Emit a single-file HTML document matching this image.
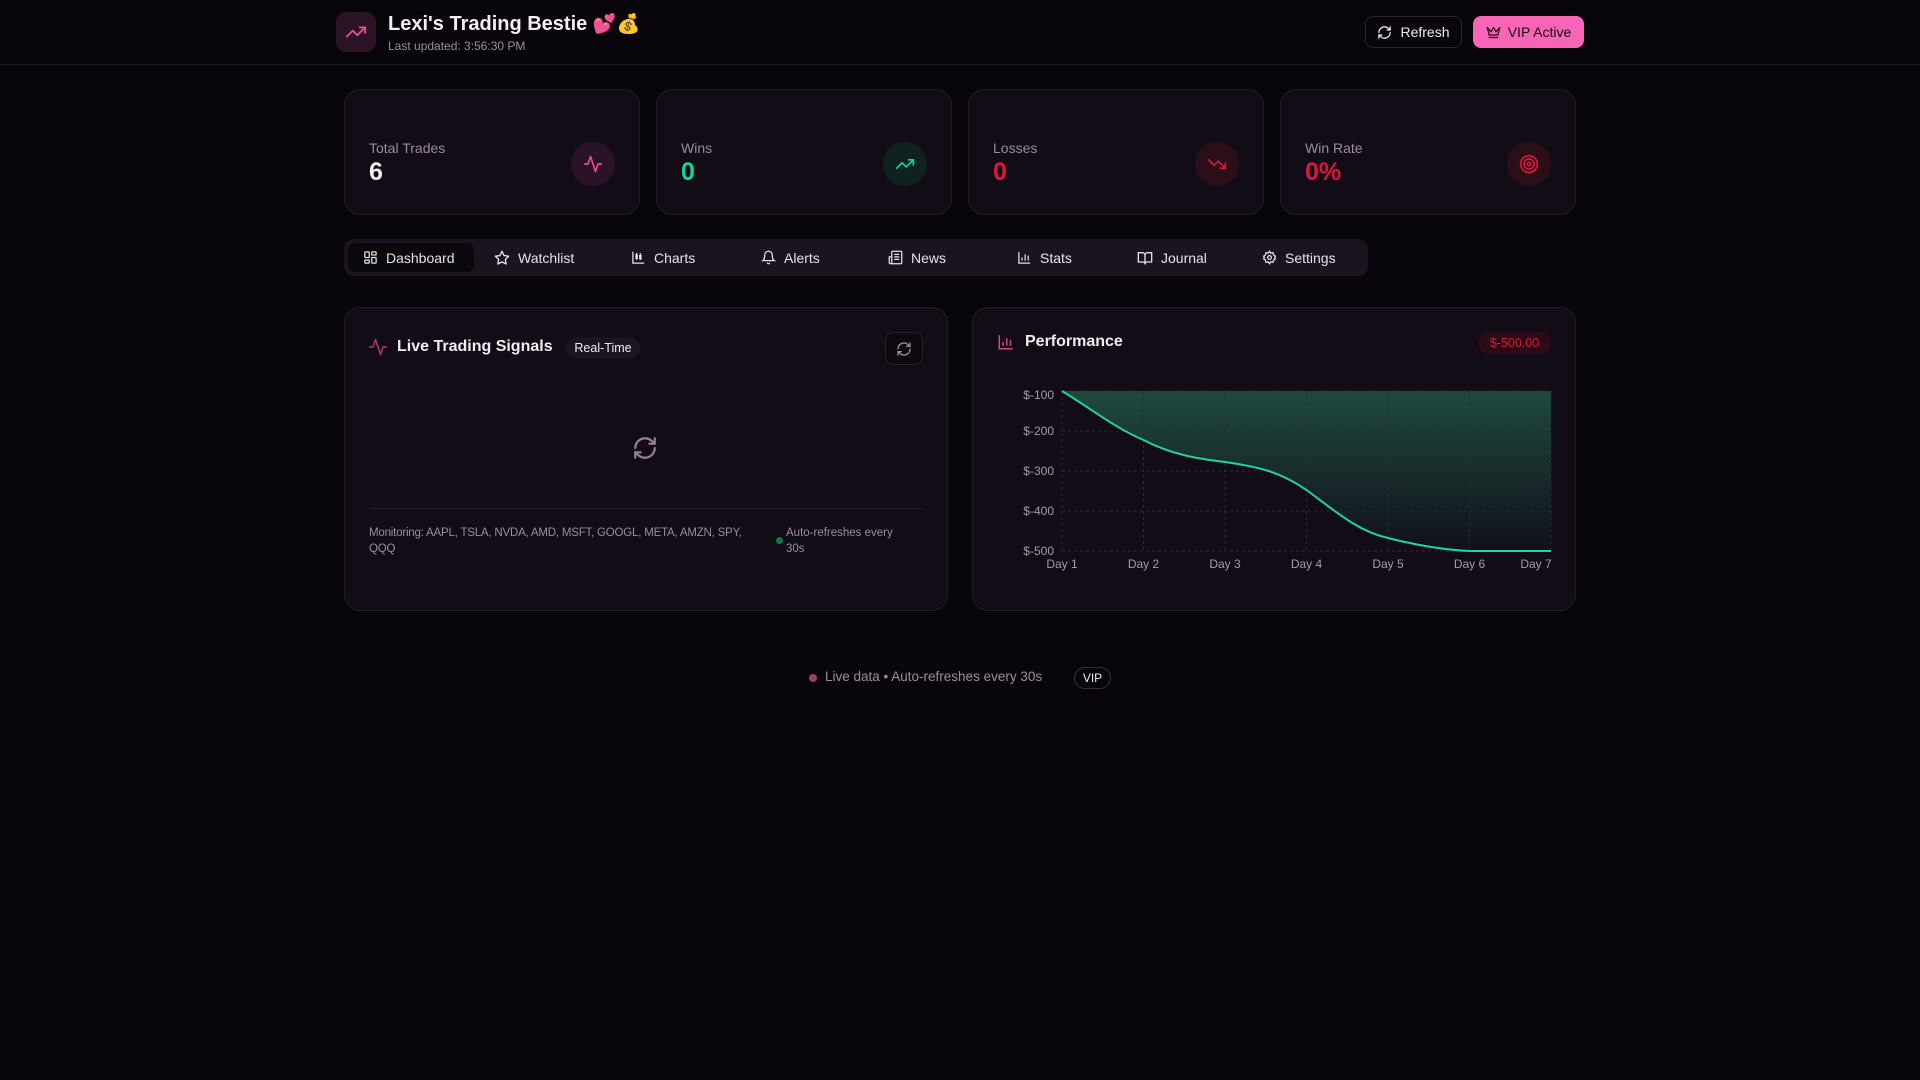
<!DOCTYPE html>
<html><head><meta charset="utf-8">
<style>
*{box-sizing:border-box;margin:0;padding:0}
body{width:1920px;height:1080px;background:#09060b;font-family:"Liberation Sans","Noto Sans CJK SC",sans-serif;color:#f3eaf2;position:relative;overflow:hidden}
.a{position:absolute}
.hdr{left:0;top:0;width:1920px;height:65px;border-bottom:1px solid #1e1620}
.card{background:#110c16;border:1px solid #241b29;border-radius:16px}
.lbl{font-size:14px;color:#9f8a9e}
.val{font-size:25px;font-weight:bold}
.circ{width:44px;height:44px;border-radius:50%;display:flex;align-items:center;justify-content:center}
.tab{top:239px;height:37px;display:flex;align-items:center;gap:8px;font-size:14px;color:#e9dfe8}
svg{display:block}
.mut{color:#9f8a9e}
</style></head><body>
<div class="a hdr"></div>
<div class="a" style="left:336px;top:12px;width:40px;height:40px;border-radius:10px;background:#2a1426;display:flex;align-items:center;justify-content:center">
<svg width="22" height="22" viewBox="0 0 24 24" fill="none" stroke="#ec4899" stroke-width="2" stroke-linecap="round" stroke-linejoin="round"><path d="M22 7l-8.5 8.5-5-5L2 17"/><path d="M16 7h6v6"/></svg></div>
<div class="a" style="left:388px;top:12px;font-size:20px;font-weight:bold;color:#f6eef5">Lexi's Trading Bestie <span style="font-family:'Noto Color Emoji',sans-serif;font-size:19px">💕💰</span></div>
<div class="a" style="left:388px;top:39px;font-size:12px;color:#9f8a9e">Last updated: 3:56:30 PM</div>
<div class="a" style="left:1365px;top:16px;width:97px;height:32px;border:1px solid #2c2230;border-radius:8px;display:flex;align-items:center;justify-content:center;gap:8px;font-size:14px;color:#f3eaf2">
<svg width="15" height="15" viewBox="0 0 24 24" fill="none" stroke="#f3eaf2" stroke-width="2" stroke-linecap="round" stroke-linejoin="round"><path d="M3 12a9 9 0 0 1 15-6.7L21 8"/><path d="M21 3v5h-5"/><path d="M21 12a9 9 0 0 1-15 6.7L3 16"/><path d="M8 16H3v5"/></svg>Refresh</div>
<div class="a" style="left:1473px;top:16px;width:111px;height:32px;background:#f865b6;border-radius:8px;display:flex;align-items:center;justify-content:center;gap:7px;font-size:14px;color:#1b0a15;font-weight:500">
<svg width="15" height="15" viewBox="0 0 24 24" fill="none" stroke="#1b0a15" stroke-width="2" stroke-linecap="round" stroke-linejoin="round"><path d="M2 4l3 12h14l3-12-6 7-4-7-4 7-6-7z"/><path d="M5 20h14"/></svg>VIP Active</div>

<div class="a card" style="left:344px;top:89px;width:296px;height:126px"></div>
<div class="a card" style="left:656px;top:89px;width:296px;height:126px"></div>
<div class="a card" style="left:968px;top:89px;width:296px;height:126px"></div>
<div class="a card" style="left:1280px;top:89px;width:296px;height:126px"></div>
<div class="a lbl" style="left:369px;top:140px">Total Trades</div>
<div class="a val" style="left:369px;top:158px;color:#f6eef5">6</div>
<div class="a circ" style="left:571px;top:142px;background:#2a1328"><svg width="20" height="20" viewBox="0 0 24 24" fill="none" stroke="#ec4899" stroke-width="2" stroke-linecap="round" stroke-linejoin="round"><path d="M22 12h-4l-3 9L9 3l-3 9H2"/></svg></div>
<div class="a lbl" style="left:681px;top:140px">Wins</div>
<div class="a val" style="left:681px;top:158px;color:#10d69b">0</div>
<div class="a circ" style="left:883px;top:142px;background:#0f2220"><svg width="20" height="20" viewBox="0 0 24 24" fill="none" stroke="#10d69b" stroke-width="2" stroke-linecap="round" stroke-linejoin="round"><path d="M22 7l-8.5 8.5-5-5L2 17"/><path d="M16 7h6v6"/></svg></div>
<div class="a lbl" style="left:993px;top:140px">Losses</div>
<div class="a val" style="left:993px;top:158px;color:#e0143c">0</div>
<div class="a circ" style="left:1195px;top:142px;background:#2a0f18"><svg width="20" height="20" viewBox="0 0 24 24" fill="none" stroke="#e0143c" stroke-width="2" stroke-linecap="round" stroke-linejoin="round"><path d="M22 17l-8.5-8.5-5 5L2 7"/><path d="M16 17h6v-6"/></svg></div>
<div class="a lbl" style="left:1305px;top:140px">Win Rate</div>
<div class="a val" style="left:1305px;top:158px;color:#e0143c">0%</div>
<div class="a circ" style="left:1507px;top:142px;background:#2a0f18"><svg width="20" height="20" viewBox="0 0 24 24" fill="none" stroke="#e0143c" stroke-width="2"><circle cx="12" cy="12" r="10"/><circle cx="12" cy="12" r="6"/><circle cx="12" cy="12" r="2"/></svg></div>

<div class="a" style="left:344px;top:239px;width:1024px;height:37px;background:#1b1320;border-radius:10px"></div>
<div class="a" style="left:348px;top:243px;width:126px;height:29px;background:#0b080d;border-radius:7px"></div>
<div class="tab a" style="left:363px"><svg width="15" height="15" viewBox="0 0 24 24" fill="none" stroke="#e9dfe8" stroke-width="2"><rect x="3" y="3" width="7" height="9" rx="1"/><rect x="14" y="3" width="7" height="5" rx="1"/><rect x="14" y="12" width="7" height="9" rx="1"/><rect x="3" y="16" width="7" height="5" rx="1"/></svg>Dashboard</div>
<div class="tab a" style="left:494px"><svg width="16" height="16" viewBox="0 0 24 24" fill="none" stroke="#e9dfe8" stroke-width="2" stroke-linejoin="round"><path d="M12 2l3.1 6.3 6.9 1-5 4.9 1.2 6.8L12 17.8 5.8 21l1.2-6.8-5-4.9 6.9-1z"/></svg>Watchlist</div>
<div class="tab a" style="left:631px"><svg width="15" height="15" viewBox="0 0 24 24" fill="none" stroke="#e9dfe8" stroke-width="2"><path d="M3 3v18h18"/><path d="M9 5v11M15 5v11M8 8h2v5H8zM14 9h2v5h-2z"/></svg>Charts</div>
<div class="tab a" style="left:761px"><svg width="15" height="15" viewBox="0 0 24 24" fill="none" stroke="#e9dfe8" stroke-width="2" stroke-linecap="round"><path d="M6 8a6 6 0 0 1 12 0c0 7 3 9 3 9H3s3-2 3-9"/><path d="M10.3 21a1.9 1.9 0 0 0 3.4 0"/></svg>Alerts</div>
<div class="tab a" style="left:888px"><svg width="15" height="15" viewBox="0 0 24 24" fill="none" stroke="#e9dfe8" stroke-width="2"><path d="M4 22h16a2 2 0 0 0 2-2V4a2 2 0 0 0-2-2H8a2 2 0 0 0-2 2v16a2 2 0 0 1-4 0v-9h4"/><path d="M10 7h8M10 11h8M10 15h8"/></svg>News</div>
<div class="tab a" style="left:1017px"><svg width="15" height="15" viewBox="0 0 24 24" fill="none" stroke="#e9dfe8" stroke-width="2"><path d="M3 3v18h18"/><path d="M8 17v-5M13 17V7M18 17v-8"/></svg>Stats</div>
<div class="tab a" style="left:1137px"><svg width="16" height="16" viewBox="0 0 24 24" fill="none" stroke="#e9dfe8" stroke-width="2" stroke-linejoin="round"><path d="M2 4h6a4 4 0 0 1 4 4v13a3 3 0 0 0-3-3H2zM22 4h-6a4 4 0 0 0-4 4v13a3 3 0 0 1 3-3h7z"/></svg>Journal</div>
<div class="tab a" style="left:1262px"><svg width="15" height="15" viewBox="0 0 24 24" fill="none" stroke="#e9dfe8" stroke-width="2"><circle cx="12" cy="12" r="3"/><path d="M12 2l2 3 3.5-.8.8 3.5L21.5 10 20 12l1.5 2-3.2 2.3-.8 3.5L14 19l-2 3-2-3-3.5.8-.8-3.5L2.5 14 4 12l-1.5-2 3.2-2.3.8-3.5L10 5z"/></svg>Settings</div>

<div class="a card" style="left:344px;top:307px;width:604px;height:304px"></div>
<svg class="a" style="left:368px;top:337px" width="20" height="20" viewBox="0 0 24 24" fill="none" stroke="#a3336f" stroke-width="2" stroke-linecap="round" stroke-linejoin="round"><path d="M22 12h-4l-3 9L9 3l-3 9H2"/></svg>
<div class="a" style="left:397px;top:338px;font-size:16px;font-weight:bold">Live Trading Signals</div>
<div class="a" style="left:566px;top:337px;width:74px;height:22px;border-radius:11px;background:#1c1421;font-size:12.5px;display:flex;align-items:center;justify-content:center">Real-Time</div>
<div class="a" style="left:885px;top:332px;width:38px;height:33px;border:1px solid #281e2c;border-radius:8px;background:#0d090f;display:flex;align-items:center;justify-content:center"><svg width="16" height="16" viewBox="0 0 24 24" fill="none" stroke="#9f8a9e" stroke-width="2" stroke-linecap="round" stroke-linejoin="round"><path d="M3 12a9 9 0 0 1 15-6.7L21 8"/><path d="M21 3v5h-5"/><path d="M21 12a9 9 0 0 1-15 6.7L3 16"/><path d="M8 16H3v5"/></svg></div>
<svg class="a" style="left:632px;top:435px" width="26" height="26" viewBox="0 0 24 24" fill="none" stroke="#9a7f96" stroke-width="2" stroke-linecap="round" stroke-linejoin="round"><path d="M3 12a9 9 0 0 1 15-6.7L21 8"/><path d="M21 3v5h-5"/><path d="M21 12a9 9 0 0 1-15 6.7L3 16"/><path d="M8 16H3v5"/></svg>
<div class="a" style="left:369px;top:508px;width:554px;height:1px;background:#251c29"></div>
<div class="a mut" style="left:369px;top:525px;width:383px;font-size:11.5px;letter-spacing:-0.2px;line-height:16px">Monitoring: AAPL, TSLA, NVDA, AMD, MSFT, GOOGL, META, AMZN, SPY, QQQ</div>
<div class="a" style="left:776px;top:537px;width:7px;height:7px;border-radius:50%;background:#0b7a55"></div>
<div class="a mut" style="left:786px;top:525px;width:112px;font-size:11.5px;line-height:16px">Auto-refreshes every 30s</div>

<div class="a card" style="left:972px;top:307px;width:604px;height:304px"></div>
<svg class="a" style="left:997px;top:333px" width="18" height="18" viewBox="0 0 24 24" fill="none" stroke="#d4418f" stroke-width="2"><path d="M3 3v18h18"/><path d="M8 17v-5M13 17V7M18 17v-8"/></svg>
<div class="a" style="left:1025px;top:333px;font-size:16px;font-weight:bold">Performance</div>
<div class="a" style="left:1478px;top:332px;width:73px;height:22px;border-radius:11px;background:#2c0b16;color:#e0143c;font-size:12.5px;display:flex;align-items:center;justify-content:center">$-500.00</div>
<svg class="a" style="left:0;top:0" width="1920" height="1080">
<defs><linearGradient id="g" x1="0" y1="391" x2="0" y2="551" gradientUnits="userSpaceOnUse"><stop offset="0" stop-color="#1f4a3e"/><stop offset="1" stop-color="#11101a"/></linearGradient></defs>
<path d="M1062 391 C1090 408,1115 428,1143.5 440 C1172 455,1200 459,1225 462 C1260 467,1280 472,1306.5 490 C1340 515,1360 532,1388 538 C1420 546,1445 550,1469.5 551 L1551 551 L1551 391 Z" fill="url(#g)"/>
<g stroke="#2e2a30" stroke-width="1" stroke-dasharray="3 3">
<path d="M1062 391H1551M1062 431H1551M1062 471H1551M1062 511H1551M1062 551H1551"/>
<path d="M1062 391V551M1143.5 391V551M1225 391V551M1306.5 391V551M1388 391V551M1469.5 391V551M1551 391V551"/>
</g>
<path d="M1062 391 C1090 408,1115 428,1143.5 440 C1172 455,1200 459,1225 462 C1260 467,1280 472,1306.5 490 C1340 515,1360 532,1388 538 C1420 546,1445 550,1469.5 551 L1551 551" fill="none" stroke="#22d3a0" stroke-width="2"/>
<g font-family="Liberation Sans, sans-serif" font-size="12" fill="#a99aa8" text-anchor="end">
<text x="1054" y="399">$-100</text><text x="1054" y="435">$-200</text><text x="1054" y="475">$-300</text><text x="1054" y="515">$-400</text><text x="1054" y="555">$-500</text>
</g>
<g font-family="Liberation Sans, sans-serif" font-size="12" fill="#a99aa8" text-anchor="middle">
<text x="1062" y="568">Day 1</text><text x="1143.5" y="568">Day 2</text><text x="1225" y="568">Day 3</text><text x="1306.5" y="568">Day 4</text><text x="1388" y="568">Day 5</text><text x="1469.5" y="568">Day 6</text><text x="1536" y="568">Day 7</text>
</g>
</svg>

<div class="a" style="left:809px;top:674px;width:8px;height:8px;border-radius:50%;background:#9b3f72"></div>
<div class="a mut" style="left:825px;top:669px;font-size:13.5px">Live data • Auto-refreshes every 30s</div>
<div class="a" style="left:1074px;top:667px;width:37px;height:22px;border:1px solid #3a2e3c;border-radius:11px;font-size:12px;display:flex;align-items:center;justify-content:center">VIP</div>
</body></html>
